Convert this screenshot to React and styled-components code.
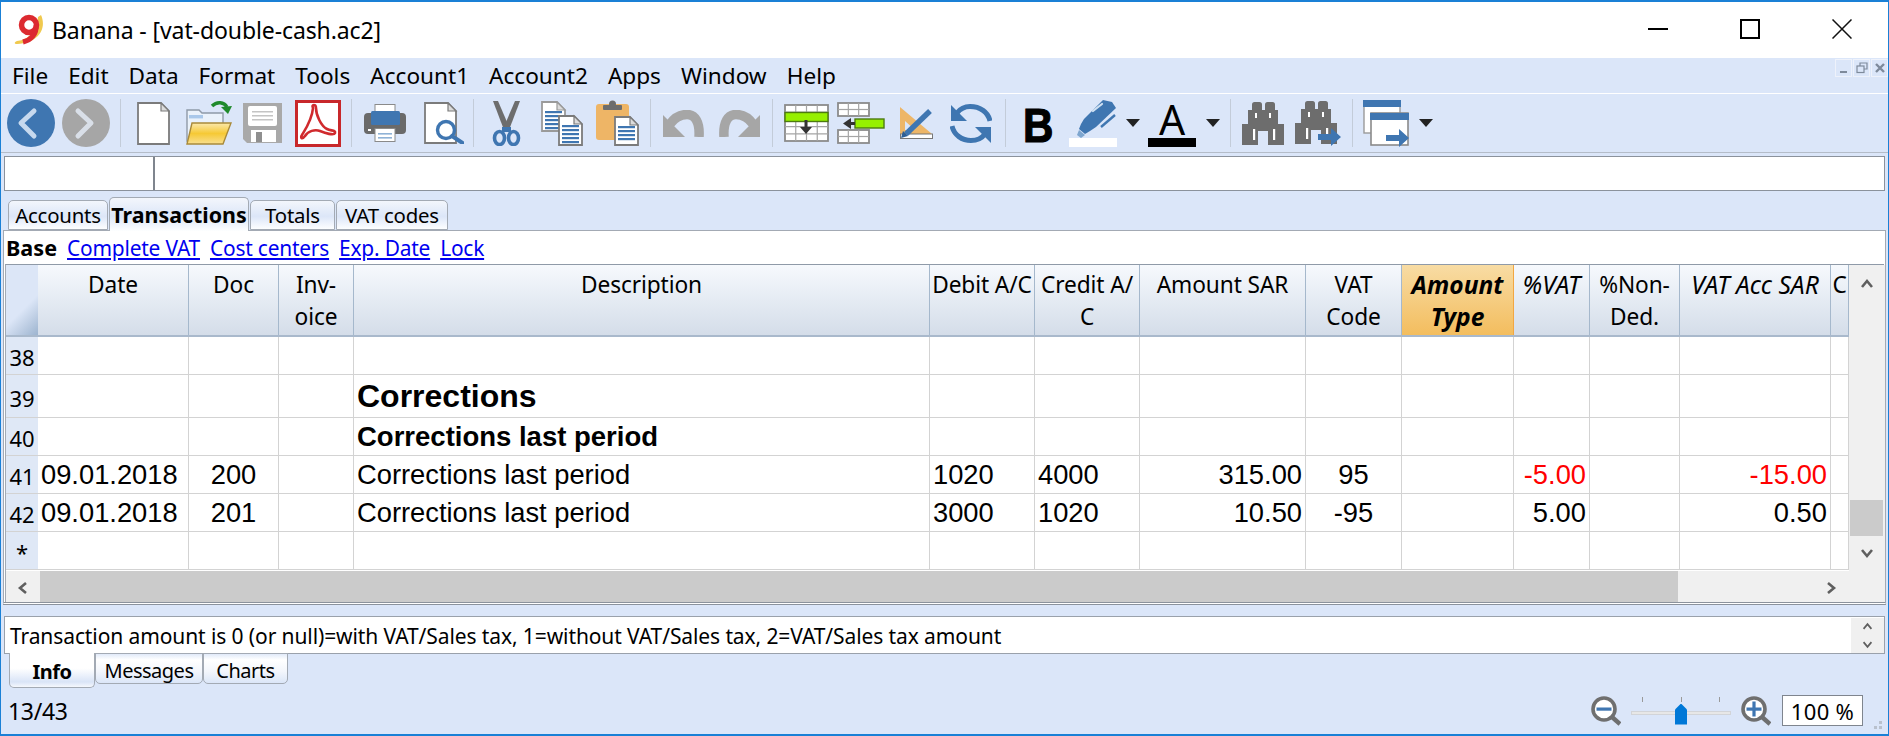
import React from "react";
import styled, { createGlobalStyle } from "styled-components";

const UI_FONT = `"Noto Sans", "Open Sans", sans-serif`;
const CELL_FONT = `"Liberation Sans", Arial, sans-serif`;
const GRID_COLUMNS = "32px 151px 90px 75px 576px 105px 105px 166px 96px 112px 76px 90px 151px 18px";

const GlobalStyle = createGlobalStyle`
  html, body { margin: 0; padding: 0; background: #dbe6f9; }
  * { box-sizing: border-box; }
`;

const Window = styled.div`
  width: 1889px;
  height: 736px;
  display: flex;
  flex-direction: column;
  overflow: hidden;
  background: #dbe6f9;
  border-style: solid;
  border-color: #1a80d6;
  border-width: 2px 1px 2px 1px;
  font-family: ${UI_FONT};
  font-size: 20px;
  color: #000;
`;

const TitleBar = styled.div`
  height: 56px;
  flex: none;
  display: flex;
  align-items: center;
  background: #fff;
  padding-left: 13px;
`;

const TitleText = styled.span`
  margin-left: 6px;
  font-size: 23px;
  letter-spacing: -0.1px;
`;

const WindowButtons = styled.div`
  margin-left: auto;
  display: flex;
  align-self: stretch;
`;

const WindowButton = styled.div`
  width: 92px;
  display: flex;
  align-items: center;
  justify-content: center;
  padding-bottom: 3px;
`;

const MenuBar = styled.div`
  height: 36px;
  flex: none;
  display: flex;
  align-items: center;
  gap: 20px;
  padding-left: 11px;
  border-bottom: 1px solid #fff;
`;

const MenuItem = styled.span`
  font-size: 22.6px;
`;

const MdiButtons = styled.div`
  margin-left: auto;
  align-self: flex-start;
  margin-top: 1px;
  display: flex;
  gap: 1px;
`;

const MdiButton = styled.div`
  width: 17px;
  height: 18px;
  border: 1px solid #eef2fb;
  display: flex;
  align-items: center;
  justify-content: center;
`;

const Toolbar = styled.div`
  height: 59px;
  flex: none;
  display: flex;
  align-items: center;
  border-bottom: 1px solid #b4bcc8;
`;

const ToolSvg = styled.svg`
  flex: none;
  display: block;
  margin-left: ${(p) => p.$ml}px;
`;

const Separator = styled.div`
  flex: none;
  width: 1px;
  height: 48px;
  background: #c3ccd9;
  margin-left: ${(p) => p.$ml}px;
`;

const BoldButton = styled.span`
  flex: none;
  width: 29px;
  margin-left: ${(p) => p.$ml}px;
  font-family: ${CELL_FONT};
  font-weight: 700;
  font-size: 49px;
  line-height: 46px;
  text-align: left;
  transform: scaleX(0.86);
  transform-origin: left center;
  -webkit-text-stroke: 1.2px #000;
  padding-top: 4px;
`;

const Swatch = styled.div`
  flex: none;
  width: 48px;
  height: 47px;
  margin-left: ${(p) => p.$ml}px;
  display: flex;
  flex-direction: column;
  align-items: center;
  justify-content: flex-end;
`;

const SwatchLetter = styled.span`
  font-size: 41px;
  line-height: 38px;
  font-weight: 400;
`;

const SwatchBar = styled.div`
  flex: none;
  align-self: stretch;
  height: 9px;
  background: ${(p) => p.$color};
`;

const FormulaBar = styled.div`
  flex: none;
  height: 35px;
  margin: 3px 3px 0 3px;
  display: flex;
  background: #fff;
  border: 1px solid #8b929c;
`;

const FormulaCell = styled.div`
  width: 150px;
  border-right: 2px solid #7f858e;
`;

const TopTabs = styled.div`
  flex: none;
  height: 33px;
  margin-top: 6px;
  padding-left: 7px;
  display: flex;
  align-items: flex-end;
  gap: 1px;
`;

const TopTab = styled.div`
  width: ${(p) => p.$w}px;
  height: ${(p) => (p.$active ? 34 : 30)}px;
  margin-bottom: ${(p) => (p.$active ? -1 : 0)}px;
  position: relative;
  display: flex;
  justify-content: center;
  align-items: center;
  white-space: nowrap;
  font-size: ${(p) => (p.$active ? 21.4 : 20.4)}px;
  font-weight: ${(p) => (p.$active ? 700 : 400)};
  letter-spacing: ${(p) => (p.$active ? 0 : -0.2)}px;
  border: 1px solid #a3aab4;
  border-bottom: ${(p) => (p.$active ? "none" : "1px solid #a3aab4")};
  border-radius: 5px 5px 0 0;
  background: linear-gradient(#f3f6fc, #dce6f8 55%, #fdfeff);
`;

const Panel = styled.div`
  flex: none;
  height: 375px;
  margin: 0 2px;
  background: #fff;
  border: 1px solid #a3aab4;
  border-bottom: 3px double #8b929c;
  display: flex;
  flex-direction: column;
`;

const ViewLinks = styled.div`
  height: 33px;
  flex: none;
  display: flex;
  align-items: center;
  gap: 10px;
  padding-left: 2px;
  font-size: 20.9px;
`;

const ViewCurrent = styled.span`
  font-weight: 700;
  font-size: 21.6px;
`;

const ViewLink = styled.a`
  color: #0000f0;
  text-decoration: underline;
  letter-spacing: -0.2px;
`;

const TableFrame = styled.div`
  flex: 1;
  min-height: 0;
  margin: 0 1px 0 1px;
  display: flex;
  border-top: 1px solid #8f9aa8;
  border-left: 1px solid #a3aab4;
`;

const TableMain = styled.div`
  width: 1843px;
  flex: none;
  display: flex;
  flex-direction: column;
  overflow: hidden;
`;

const HeaderRow = styled.div`
  display: grid;
  grid-template-columns: ${GRID_COLUMNS};
  height: 72px;
  flex: none;
  border-bottom: 2px solid #a9b9cc;
`;

const CornerCell = styled.div`
  background: linear-gradient(135deg, #dce6f7 60%, #9db4cf);
`;

const HeaderCell = styled.div`
  padding-top: 4px;
  font-size: ${(p) => (p.$italic ? 24.6 : 22.7)}px;
  line-height: 32px;
  text-align: center;
  white-space: pre;
  overflow: hidden;
  letter-spacing: ${(p) => (p.$italic ? 0 : -0.1)}px;
  font-style: ${(p) => (p.$italic ? "italic" : "normal")};
  font-weight: ${(p) => (p.$bold ? 700 : 400)};
  border-right: 1px solid ${(p) => (p.$hot ? "#f2a742" : "#a5b8cc")};
  background: ${(p) =>
    p.$hot
      ? "linear-gradient(#f8dca4, #f3bd5e)"
      : "linear-gradient(#f6f9fd, #d4dde9)"};
`;

const Row = styled.div`
  display: grid;
  grid-template-columns: ${GRID_COLUMNS};
  height: ${(p) => p.$h}px;
  flex: none;
`;

const RowNumber = styled.div`
  background: #dfe8f6;
  border-bottom: 1px solid #d3d3d3;
  display: flex;
  align-items: center;
  justify-content: center;
  padding-top: 3px;
  font-size: 22px;
`;

const Cell = styled.div`
  border-right: 1px solid #d3d3d3;
  border-bottom: 1px solid #d3d3d3;
  padding: 0 3px;
  display: flex;
  align-items: center;
  white-space: nowrap;
  font-family: ${CELL_FONT};
  font-size: ${(p) => p.$size || 27.3}px;
  font-weight: ${(p) => (p.$bold ? 700 : 400)};
  color: ${(p) => (p.$red ? "#ff0000" : "#000")};
  justify-content: ${(p) =>
    p.$align === "right" ? "flex-end" : p.$align === "center" ? "center" : "flex-start"};
`;

const HScroll = styled.div`
  flex: none;
  height: 33px;
  margin-top: 1px;
  display: flex;
  align-items: stretch;
  background: #f0f0f0;
`;

const ScrollEnd = styled.div`
  flex: ${(p) => (p.$grow ? 1 : "none")};
  width: ${(p) => (p.$w ? `${p.$w}px` : "auto")};
  padding-right: ${(p) => p.$pr || 0}px;
  display: flex;
  align-items: center;
  justify-content: ${(p) => (p.$grow ? "flex-end" : "center")};
`;

const HThumb = styled.div`
  width: 1638px;
  flex: none;
  background: #cbcbcb;
`;

const VScroll = styled.div`
  width: 36px;
  flex: none;
  background: #f0f0f0;
  padding: 0 2px 0 1px;
  display: flex;
  flex-direction: column;
  align-items: center;
`;

const VTrack = styled.div`
  height: 197px;
  flex: none;
`;

const VArrow = styled.div`
  height: ${(p) => p.$h}px;
  flex: none;
  display: flex;
  align-items: center;
  justify-content: center;
`;

const VThumb = styled.div`
  width: 33px;
  height: 36px;
  flex: none;
  background: #cbcbcb;
`;

const InfoBox = styled.div`
  flex: none;
  height: 38px;
  margin: 11px 3px 0 3px;
  background: #fff;
  border: 1px solid #9aa1ab;
  display: flex;
  align-items: center;
  padding: 1px 0 0 5px;
  font-size: 21px;
  letter-spacing: -0.1px;
`;

const InfoScroll = styled.div`
  margin-left: auto;
  width: 33px;
  align-self: stretch;
  background: #f0f0f0;
  display: flex;
  flex-direction: column;
  align-items: center;
  justify-content: center;
  gap: 7px;
`;

const BottomTabs = styled.div`
  flex: none;
  height: 34px;
  padding-left: 8px;
  margin-top: -1px;
  display: flex;
  align-items: flex-start;
`;

const BottomTab = styled.div`
  width: ${(p) => p.$w}px;
  height: ${(p) => (p.$active ? 35 : 31)}px;
  padding-top: 3px;
  display: flex;
  align-items: center;
  justify-content: center;
  font-size: 20px;
  letter-spacing: -0.5px;
  font-weight: ${(p) => (p.$active ? 700 : 400)};
  border: 1px solid #a3aab4;
  border-top: ${(p) => (p.$active ? "none" : "1px solid #a3aab4")};
  border-radius: 0 0 5px 5px;
  background: ${(p) =>
    p.$active
      ? "linear-gradient(#fff 45%, #d9e4f7 85%, #f5f8fd)"
      : "linear-gradient(#e1eaf9, #fff 20%, #f3f6fc 60%, #dbe6f8)"};
`;

const StatusBar = styled.div`
  flex: 1;
  position: relative;
  display: flex;
  align-items: center;
  padding-left: 7px;
  font-size: 23px;
  letter-spacing: -0.3px;
`;

const ZoomControls = styled.div`
  margin-left: auto;
  margin-right: 25px;
  display: flex;
  align-items: center;
  gap: 10px;
`;

const Slider = styled.div`
  position: relative;
  width: 100px;
  height: 28px;
`;

const SliderTrack = styled.div`
  position: absolute;
  left: 0;
  right: 0;
  top: 14px;
  height: 4px;
  background: #e7e7e7;
  border: 1px solid #d2d4d8;
`;

const SliderTicks = styled.div`
  display: flex;
  justify-content: space-between;
  padding: 0 11px;
`;

const SliderTick = styled.div`
  width: 1px;
  height: 5px;
  background: #9a9a9a;
`;

const SliderThumb = styled.div`
  position: absolute;
  left: 44px;
  top: 7px;
  width: 12px;
  height: 21px;
  background: #0078d7;
  clip-path: polygon(50% 0, 100% 28%, 100% 100%, 0 100%, 0 28%);
`;

const ZoomValue = styled.div`
  width: 81px;
  height: 31px;
  background: #fff;
  border: 1px solid #7f858e;
  display: flex;
  align-items: center;
  justify-content: center;
  font-size: 22px;
  margin-left: 1px;
  letter-spacing: 0.3px;
`;

const Grip = styled.svg`
  position: absolute;
  right: 4px;
  bottom: 3px;
`;

const Icon = ({ w, h, ml, children }) => (
  <ToolSvg $ml={ml} width={w} height={h} viewBox={`0 0 ${w} ${h}`}>
    {children}
  </ToolSvg>
);

const Chevron = ({ dir, size = 14, color = "#5f5f5f", width = 2.6 }) => {
  const points = {
    up: "2,10 7,4 12,10",
    down: "2,4 7,10 12,4",
    left: "10,2 4,7 10,12",
    right: "4,2 10,7 4,12",
  };
  return (
    <svg width={size} height={size} viewBox="0 0 14 14">
      <polyline points={points[dir]} fill="none" stroke={color} strokeWidth={width} />
    </svg>
  );
};

const Logo = () => (
  <svg width="32" height="32" viewBox="0 0 32 32">
    <path d="M27 1 C33 14 25 29 3 30 C0 30 0 28 3 27 C15 26 23 16 24 3 Z" fill="#f0c94e" />
    <circle cx="15" cy="11" r="7.5" fill="none" stroke="#dc2a30" strokeWidth="5.5" />
    <path d="M22 11 C23 20 17 26 9 28" fill="none" stroke="#dc2a30" strokeWidth="5" />
  </svg>
);

const Doc = ({ x = 0, y = 0, w, h, lines, stroke = "#7b7b7b" }) => {
  const fold = 9;
  return (
    <g transform={`translate(${x} ${y})`}>
      <path
        d={`M1 1 H${w - fold} L${w - 1} ${fold} V${h - 1} H1 Z`}
        fill="#fff"
        stroke={stroke}
        strokeWidth="1.8"
      />
      <path d={`M${w - fold} 1 V${fold} H${w - 1} Z`} fill="#dcdcdc" stroke={stroke} strokeWidth="1.2" />
      {lines &&
        [...Array(lines)].map((_, i) => (
          <rect key={i} x={4} y={fold + 1 + i * 4} width={w - 8} height={2.2} fill="#3f76b1" />
        ))}
    </g>
  );
};

const BackIcon = ({ ml, fill, stroke, dir }) => (
  <Icon w={48} h={48} ml={ml}>
    <circle cx="24" cy="24" r="24" fill={fill} />
    <polyline
      points={dir === "left" ? "27,12 14,24 27,37" : "16,12 29,24 16,37"}
      fill="none"
      stroke={stroke}
      strokeWidth="5"
      strokeLinecap="round"
      strokeLinejoin="round"
    />
  </Icon>
);

const OpenIcon = () => (
  <Icon w={46} h={44} ml={16}>
    <defs>
      <linearGradient id="folderFill" x1="0" y1="0" x2="0" y2="1">
        <stop offset="0" stopColor="#fbe9ad" />
        <stop offset="0.5" stopColor="#f6c935" />
        <stop offset="1" stopColor="#f9df90" />
      </linearGradient>
    </defs>
    <path d="M1 9 H13 L16 12 H37 V40 H1 Z" fill="#eaf2fb" stroke="#8f9aa8" strokeWidth="1.4" />
    <rect x="3" y="14" width="14" height="3.4" fill="#a9c8ea" />
    <path d="M6 22 H45 L37 43 H1 Z" fill="url(#folderFill)" stroke="#a98a3a" strokeWidth="1.4" />
    <path d="M26 5 C31 0 38 1 41 6" fill="none" stroke="#1f8a2c" strokeWidth="3.4" />
    <polygon points="35,6 46,5 42,13" fill="#1f8a2c" />
  </Icon>
);

const SaveIcon = () => (
  <Icon w={39} h={40} ml={11}>
    <path d="M0 0 H39 V40 H4 L0 36 Z" fill="#a9a9a9" />
    <rect x="5" y="3" width="29" height="20" rx="2" fill="#fff" />
    <rect x="9" y="8" width="21" height="1.5" fill="#c4c4c4" />
    <rect x="9" y="12" width="21" height="1.5" fill="#c4c4c4" />
    <rect x="9" y="16" width="21" height="1.5" fill="#c4c4c4" />
    <rect x="8" y="27" width="25" height="12" fill="#fff" />
    <rect x="13" y="29" width="6" height="10" fill="#8f8f8f" />
  </Icon>
);

const PdfIcon = () => (
  <Icon w={46} h={47} ml={13}>
    <rect x="1.5" y="1.5" width="43" height="44" fill="#fff" stroke="#c8282b" strokeWidth="3" />
    <path
      d="M18 8 C16 4 21 4 21 8 C21 15 26 26 32 29 C36 31 41 30 40 33 C39 36 30 33 25 31 C20 29 13 31 10 36 C7 40 5 38 7 35 C10 30 17 20 18 8 Z"
      fill="none"
      stroke="#d02a2d"
      strokeWidth="2.6"
    />
  </Icon>
);

const PrinterIcon = () => (
  <Icon w={42} h={38} ml={12}>
    <rect x="11" y="0.5" width="20" height="9" fill="#fff" stroke="#8a8a8a" strokeWidth="1" />
    <rect x="0" y="9" width="42" height="21" rx="4" fill="#6a6a6a" />
    <rect x="7" y="7" width="29" height="14" rx="1.5" fill="#3f76b1" />
    <rect x="4" y="25" width="3" height="2" fill="#fff" />
    <rect x="11" y="24.5" width="20" height="13" fill="#fff" stroke="#8a8a8a" strokeWidth="1" />
    <rect x="14" y="29" width="14" height="1.6" fill="#8fb2d6" />
    <rect x="14" y="33" width="14" height="1.6" fill="#8fb2d6" />
  </Icon>
);

const PreviewIcon = () => (
  <Icon w={40} h={42} ml={18}>
    <Doc w={33} h={42} />
    <circle cx="22" cy="28" r="8.5" fill="#fff" stroke="#3f76b1" strokeWidth="3.4" />
    <line x1="28" y1="34" x2="38.5" y2="41" stroke="#3f76b1" strokeWidth="4" strokeLinecap="round" />
  </Icon>
);

const ScissorsIcon = () => (
  <Icon w={30} h={45} ml={18}>
    <path d="M1 0 L6 0 L18 28 L12 29 Z" fill="#6d6d6d" />
    <path d="M28 0 L23 0 L11 28 L17 29 Z" fill="#6d6d6d" />
    <rect x="10" y="26" width="9" height="5" fill="#3f76b1" />
    <ellipse cx="7.5" cy="37" rx="5" ry="6.5" fill="none" stroke="#3f76b1" strokeWidth="3.6" />
    <ellipse cx="21.5" cy="37" rx="5" ry="6.5" fill="none" stroke="#3f76b1" strokeWidth="3.6" />
  </Icon>
);

const CopyIcon = () => (
  <Icon w={42} h={45} ml={19}>
    <Doc w={25} h={31} lines={5} stroke="#9a9a9a" />
    <Doc x={17} y={14} w={25} h={31} lines={5} />
  </Icon>
);

const PasteIcon = () => (
  <Icon w={43} h={46} ml={13}>
    <rect x="0" y="4" width="33" height="36" rx="3" fill="#eeb566" />
    <rect x="7" y="5" width="19" height="5" rx="1" fill="#6d6d6d" />
    <circle cx="16.5" cy="4" r="3.5" fill="#6d6d6d" />
    <Doc x={18} y={16} w={25} h={30} lines={4} />
  </Icon>
);

const UndoIcon = ({ ml, flip }) => (
  <Icon w={42} h={27} ml={ml}>
    <g transform={flip ? "translate(42 0) scale(-1 1)" : undefined}>
      <path d="M7 14 C12 7 18 4.5 24 4.5 C32 4.5 37 12 36 27" fill="none" stroke="#a6a6a6" strokeWidth="9.5" />
      <polygon points="0,5 0,27 22,27" fill="#a6a6a6" />
    </g>
  </Icon>
);

const GridLines = ({ x, y, w, h, cols, rows }) => {
  const cw = w / cols;
  const rh = h / rows;
  return (
    <g>
      <rect x={x} y={y} width={w} height={h} fill="#fff" stroke="#8b8b8b" strokeWidth="1.8" />
      {[...Array(cols - 1)].map((_, i) => (
        <line key={i} x1={x + cw * (i + 1)} x2={x + cw * (i + 1)} y1={y} y2={y + h} stroke="#a5a5a5" strokeWidth="1.2" />
      ))}
      {[...Array(rows - 1)].map((_, i) => (
        <line key={i} x1={x} x2={x + w} y1={y + rh * (i + 1)} y2={y + rh * (i + 1)} stroke="#a5a5a5" strokeWidth="1.2" />
      ))}
    </g>
  );
};

const InsertRowIcon = () => (
  <Icon w={45} h={38} ml={11}>
    <GridLines x={1} y={1} w={43} h={36} cols={4} rows={5} />
    <rect x="1" y="8.5" width="43" height="9" fill="#96f000" stroke="#4c7a10" strokeWidth="1.4" />
    <path d="M22 16 V27" stroke="#333" strokeWidth="3" />
    <polygon points="16,23 28,23 22,30" fill="#333" />
  </Icon>
);

const AddRowIcon = () => (
  <Icon w={48} h={42} ml={8}>
    <GridLines x={1} y={1} w={31} h={13} cols={3} rows={2} />
    <GridLines x={1} y={28} w={31} h={13} cols={3} rows={2} />
    <rect x="18" y="17" width="29" height="9" fill="#96f000" stroke="#4c7a10" strokeWidth="1.4" />
    <path d="M18 21.5 H11" stroke="#333" strokeWidth="3" />
    <polygon points="14,16 14,27 6,21.5" fill="#333" />
  </Icon>
);

const SetSquareIcon = () => (
  <Icon w={33} h={32} ml={15}>
    <path d="M0 0 L32 27 H0 Z M5 14 V23 H15 Z" fill="#edb668" fillRule="evenodd" />
    <rect x="0.5" y="27" width="32" height="4.5" fill="#fff" stroke="#777" strokeWidth="1" />
    <path d="M6 27 L30 4" stroke="#3f76b1" strokeWidth="5.5" />
    <path d="M1 31 L3 24 L8 29 Z" fill="#2d5f96" />
  </Icon>
);

const RefreshIcon = () => (
  <Icon w={42} h={39} ml={17}>
    <path d="M40 17 C38 8 30 2.5 20 2.5 C14 2.5 10 5 7 9" fill="none" stroke="#3f76b1" strokeWidth="5" />
    <polygon points="1,1 1,17 17,17" fill="#3f76b1" />
    <path d="M2 22 C4 31 12 36.5 21 36.5 C27 36.5 32 34 35 30" fill="none" stroke="#3f76b1" strokeWidth="5" />
    <polygon points="41,39 41,23 25,23" fill="#3f76b1" />
  </Icon>
);

const MarkerIcon = () => (
  <Icon w={48} h={47} ml={17}>
    <path d="M34 0 L43 2 L47 8 L27 27 L21 31 L16 34 L10 29 L12 24 L15 19 Z" fill="#3f76b1" />
    <path d="M10 30 L16 35 L12 38 L8 35 Z" fill="#7ea6cf" />
    <path d="M24 11 L33 4" stroke="#cfe0f2" strokeWidth="2.2" strokeLinecap="round" />
    <path d="M32 27 L46 15" stroke="#3f76b1" strokeWidth="2.4" />
    <rect x="0" y="38" width="48" height="9" fill="#fff" />
  </Icon>
);

const DropArrow = ({ ml }) => (
  <Icon w={14} h={8} ml={ml}>
    <polygon points="0,0 14,0 7,8" fill="#222" />
  </Icon>
);

const Binoculars = () => (
  <g fill="#6d6d6d">
    <rect x="10" y="0" width="10" height="10" rx="2.5" />
    <rect x="23" y="0" width="10" height="10" rx="2.5" />
    <rect x="6" y="8" width="30" height="14" />
    <rect x="0" y="22" width="16" height="21" />
    <rect x="26" y="22" width="16" height="21" />
    <rect x="16" y="20" width="10" height="9" />
    <rect x="13" y="11" width="2" height="5" fill="#fff" />
    <rect x="27" y="11" width="2" height="5" fill="#fff" />
    <rect x="11" y="27" width="2.2" height="11" fill="#fff" />
    <rect x="31" y="27" width="2.2" height="11" fill="#fff" />
  </g>
);

const BlueArrow = ({ x, y }) => (
  <polygon
    transform={`translate(${x} ${y})`}
    points="0,6 13,6 13,0 23,9 13,18 13,12 0,12"
    fill="#3f76b1"
  />
);

const WindowsIcon = () => (
  <Icon w={47} h={47} ml={10}>
    <rect x="1" y="1" width="36" height="32" fill="#fff" stroke="#9a9a9a" strokeWidth="1.4" />
    <rect x="0" y="0" width="38" height="7" fill="#3f76b1" />
    <rect x="8" y="13" width="37" height="32" fill="#fff" stroke="#8a8a8a" strokeWidth="1.6" />
    <rect x="7" y="13" width="39" height="7" fill="#3f76b1" />
    <BlueArrow x={23} y={29} />
  </Icon>
);

const ZoomGlass = ({ plus }) => (
  <svg width="30" height="30" viewBox="0 0 30 30">
    <circle cx="13" cy="13" r="11" fill="#fff" stroke="#6f6f6f" strokeWidth="3.6" />
    <line x1="21" y1="21" x2="29" y2="28" stroke="#6f6f6f" strokeWidth="4.4" />
    <rect x="5.5" y="11.5" width="15" height="3.2" fill="#3f76b1" />
    {plus && <rect x="11.4" y="5.5" width="3.2" height="15" fill="#3f76b1" />}
  </svg>
);

const MdiIcon = ({ kind }) => (
  <svg width="12" height="12" viewBox="0 0 12 12">
    {kind === "min" && <rect x="2" y="9" width="7" height="2" fill="#7e8a9b" />}
    {kind === "restore" && (
      <g fill="none" stroke="#7e8a9b" strokeWidth="1.2">
        <rect x="1" y="4" width="7" height="6.5" />
        <path d="M4 4 V1 H11 V7 H8" />
      </g>
    )}
    {kind === "close" && (
      <path d="M2 2 L10 10 M10 2 L2 10" stroke="#7e8a9b" strokeWidth="2.4" />
    )}
  </svg>
);

const menus = ["File", "Edit", "Data", "Format", "Tools", "Account1", "Account2", "Apps", "Window", "Help"];

const headers = [
  { label: "Date" },
  { label: "Doc" },
  { label: "Inv-\noice" },
  { label: "Description" },
  { label: "Debit A/C" },
  { label: "Credit A/\nC" },
  { label: "Amount SAR" },
  { label: "VAT\nCode" },
  { label: "Amount\nType", italic: true, bold: true, hot: true },
  { label: "%VAT", italic: true },
  { label: "%Non-\nDed." },
  { label: "VAT Acc SAR", italic: true },
  { label: "C" },
];

const aligns = ["left", "center", "left", "left", "left", "left", "right", "center", "left", "right", "left", "right", "left"];

const rows = [
  { id: "38", h: 38, cells: {} },
  { id: "39", h: 43, cells: { 3: "Corrections" }, size: 32, bold: true },
  { id: "40", h: 38, cells: { 3: "Corrections last period" }, size: 27.5, bold: true },
  {
    id: "41",
    h: 38,
    cells: { 0: "09.01.2018", 1: "200", 3: "Corrections last period", 4: "1020", 5: "4000", 6: "315.00", 7: "95", 9: "-5.00", 11: "-15.00" },
    red: [9, 11],
  },
  {
    id: "42",
    h: 38,
    cells: { 0: "09.01.2018", 1: "201", 3: "Corrections last period", 4: "3000", 5: "1020", 6: "10.50", 7: "-95", 9: "5.00", 11: "0.50" },
  },
  { id: "*", h: 38, cells: {} },
];

const App = () => (
  <Window>
    <GlobalStyle />
    <TitleBar>
      <Logo />
      <TitleText>Banana - [vat-double-cash.ac2]</TitleText>
      <WindowButtons>
        <WindowButton>
          <svg width="20" height="20" viewBox="0 0 20 20">
            <rect x="0" y="9" width="20" height="2" fill="#000" />
          </svg>
        </WindowButton>
        <WindowButton>
          <svg width="20" height="20" viewBox="0 0 20 20">
            <rect x="1" y="1" width="18" height="18" fill="none" stroke="#000" strokeWidth="2" />
          </svg>
        </WindowButton>
        <WindowButton>
          <svg width="20" height="20" viewBox="0 0 20 20">
            <path d="M0.5 0.5 L19.5 19.5 M19.5 0.5 L0.5 19.5" stroke="#111" strokeWidth="1.5" />
          </svg>
        </WindowButton>
      </WindowButtons>
    </TitleBar>

    <MenuBar>
      {menus.map((m) => (
        <MenuItem key={m}>{m}</MenuItem>
      ))}
      <MdiButtons>
        <MdiButton><MdiIcon kind="min" /></MdiButton>
        <MdiButton><MdiIcon kind="restore" /></MdiButton>
        <MdiButton><MdiIcon kind="close" /></MdiButton>
      </MdiButtons>
    </MenuBar>

    <Toolbar>
      <BackIcon ml={6} fill="#3f76b1" stroke="#c7d9ee" dir="left" />
      <BackIcon ml={7} fill="#a6a6a6" stroke="#d9dfe8" dir="right" />
      <Separator $ml={10} />
      <Icon w={33} h={43} ml={16}><Doc w={33} h={43} /></Icon>
      <OpenIcon />
      <SaveIcon />
      <PdfIcon />
      <Separator $ml={10} />
      <PrinterIcon />
      <PreviewIcon />
      <Separator $ml={9} />
      <ScissorsIcon />
      <CopyIcon />
      <PasteIcon />
      <Separator $ml={11} />
      <UndoIcon ml={12} />
      <UndoIcon ml={13} flip />
      <Separator $ml={12} />
      <InsertRowIcon />
      <AddRowIcon />
      <SetSquareIcon />
      <RefreshIcon />
      <Separator $ml={13} />
      <BoldButton $ml={17}>B</BoldButton>
      <MarkerIcon />
      <DropArrow ml={9} />
      <Swatch $ml={8}>
        <SwatchLetter>A</SwatchLetter>
        <SwatchBar $color="#000" />
      </Swatch>
      <DropArrow ml={10} />
      <Separator $ml={10} />
      <Icon w={42} h={43} ml={11}><Binoculars /></Icon>
      <Icon w={46} h={45} ml={11}>
        <Binoculars />
        <BlueArrow x={23} y={27} />
      </Icon>
      <Separator $ml={11} />
      <WindowsIcon />
      <DropArrow ml={9} />
    </Toolbar>

    <FormulaBar>
      <FormulaCell />
    </FormulaBar>

    <TopTabs>
      <TopTab $w={100}>Accounts</TopTab>
      <TopTab $w={140} $active>Transactions</TopTab>
      <TopTab $w={85}>Totals</TopTab>
      <TopTab $w={112}>VAT codes</TopTab>
    </TopTabs>

    <Panel>
      <ViewLinks>
        <ViewCurrent>Base</ViewCurrent>
        <ViewLink>Complete VAT</ViewLink>
        <ViewLink>Cost centers</ViewLink>
        <ViewLink>Exp. Date</ViewLink>
        <ViewLink>Lock</ViewLink>
      </ViewLinks>
      <TableFrame>
        <TableMain>
          <HeaderRow>
            <CornerCell />
            {headers.map((h) => (
              <HeaderCell key={h.label} $italic={h.italic} $bold={h.bold} $hot={h.hot}>
                {h.label}
              </HeaderCell>
            ))}
          </HeaderRow>
          {rows.map((r) => (
            <Row key={r.id} $h={r.h}>
              <RowNumber>{r.id}</RowNumber>
              {aligns.map((a, i) => (
                <Cell
                  key={i}
                  $align={a}
                  $size={r.size}
                  $bold={r.bold}
                  $red={r.red && r.red.includes(i)}
                >
                  {r.cells[i]}
                </Cell>
              ))}
            </Row>
          ))}
          <HScroll>
            <ScrollEnd $w={34}><Chevron dir="left" /></ScrollEnd>
            <HThumb />
            <ScrollEnd $grow $pr={11}><Chevron dir="right" /></ScrollEnd>
          </HScroll>
        </TableMain>
        <VScroll>
          <VArrow $h={38}><Chevron dir="up" /></VArrow>
          <VTrack />
          <VThumb />
          <VArrow $h={33}><Chevron dir="down" /></VArrow>
        </VScroll>
      </TableFrame>
    </Panel>

    <InfoBox>
      Transaction amount is 0 (or null)=with VAT/Sales tax, 1=without VAT/Sales tax, 2=VAT/Sales tax amount
      <InfoScroll>
        <Chevron dir="up" size={11} width={2.2} />
        <Chevron dir="down" size={11} width={2.2} />
      </InfoScroll>
    </InfoBox>

    <BottomTabs>
      <BottomTab $w={86} $active>Info</BottomTab>
      <BottomTab $w={108}>Messages</BottomTab>
      <BottomTab $w={85}>Charts</BottomTab>
    </BottomTabs>

    <StatusBar>
      13/43
      <ZoomControls>
        <ZoomGlass />
        <Slider>
          <SliderTicks>
            <SliderTick />
            <SliderTick />
            <SliderTick />
          </SliderTicks>
          <SliderTrack />
          <SliderThumb />
        </Slider>
        <ZoomGlass plus />
        <ZoomValue>100 %</ZoomValue>
      </ZoomControls>
      <Grip width="10" height="10" viewBox="0 0 10 10">
        <rect x="5" y="0" width="3" height="3" fill="#b9c1cd" />
        <rect x="0" y="5" width="3" height="3" fill="#b9c1cd" />
        <rect x="5" y="5" width="3" height="3" fill="#b9c1cd" />
      </Grip>
    </StatusBar>
  </Window>
);

export default App;
